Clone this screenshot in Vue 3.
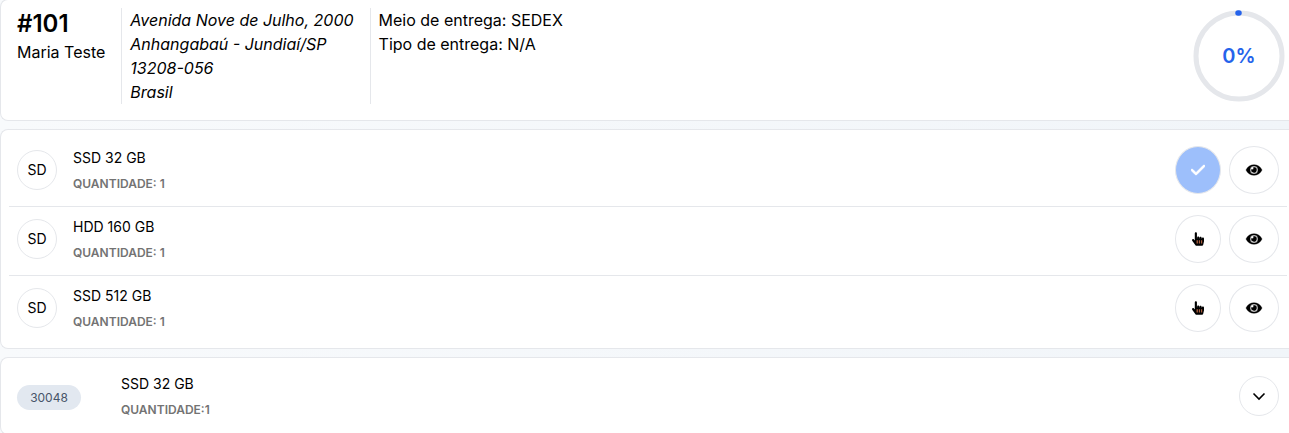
<script setup>
const items = [
  { name: 'SSD 32 GB', initials: 'SD', quantity: 1, done: true },
  { name: 'HDD 160 GB', initials: 'SD', quantity: 1, done: false },
  { name: 'SSD 512 GB', initials: 'SD', quantity: 1, done: false },
]
</script>

<template>
  <main class="page">
    <header class="card order">
      <div class="customer">
        <h1>#101</h1>
        <p>Maria Teste</p>
      </div>
      <address>
        Avenida Nove de Julho, 2000<br />
        Anhangabaú - Jundiaí/SP<br />
        13208-056<br />
        Brasil
      </address>
      <div class="delivery">
        <p>Meio de entrega: SEDEX</p>
        <p>Tipo de entrega: N/A</p>
      </div>
      <div class="progress">
        <svg viewBox="0 0 96 96" aria-hidden="true">
          <circle cx="48" cy="48" r="43" fill="none" stroke="#e5e7eb" stroke-width="5" />
          <path d="M47 5h1" fill="none" stroke="#2563eb" stroke-width="5.500" stroke-linecap="round" />
        </svg>
        <span>0%</span>
      </div>
    </header>

    <ul class="card items">
      <li v-for="item in items" :key="item.name">
        <div class="row">
          <span class="avatar">{{ item.initials }}</span>
          <div class="info">
            <p class="name">{{ item.name }}</p>
            <p class="quantity">QUANTIDADE: {{ item.quantity }}</p>
          </div>
          <button v-if="item.done" type="button" class="round pick done" aria-label="Separado" disabled>
            <svg viewBox="0 0 448 512" class="check">
              <path d="M438.6 105.4c12.5 12.5 12.5 32.8 0 45.3l-256 256c-12.5 12.5-32.8 12.5-45.3 0l-128-128c-12.5-12.5-12.5-32.8 0-45.3s32.8-12.5 45.3 0L160 338.7 393.4 105.4c12.5-12.5 32.8-12.5 45.3 0z" />
            </svg>
          </button>
          <button v-else type="button" class="round pick" aria-label="Separar">
            <svg viewBox="0 0 448 512" class="hand">
              <path d="M448 240v96c0 3.084-.356 6.159-1.063 9.162l-32 136C410.686 499.23 394.562 512 376 512H168a40.004 40.004 0 0 1-32.35-16.473l-127.997-176c-12.993-17.866-9.043-42.883 8.822-55.876 17.867-12.994 42.884-9.043 55.877 8.823L104 315.992V40c0-22.091 17.908-40 40-40s40 17.909 40 40v200h8v-40c0-22.091 17.908-40 40-40s40 17.909 40 40v40h8v-24c0-22.091 17.908-40 40-40s40 17.909 40 40v24h8c0-22.091 17.908-40 40-40s40 17.909 40 40z" />
              <path class="gaps" d="M170 300h50v120h-50zM255 300h45v120h-45zM335 300h45v120h-45z" />
            </svg>
          </button>
          <button type="button" class="round view" aria-label="Visualizar">
            <svg viewBox="0 0 576 512" class="eye">
              <path d="M572.52 241.4C518.29 135.59 410.93 64 288 64S57.68 135.64 3.48 241.41a32.35 32.35 0 0 0 0 29.19C57.71 376.41 165.07 448 288 448s230.32-71.64 284.52-177.41a32.35 32.35 0 0 0 0-29.19zM288 400a144 144 0 1 1 144-144 143.93 143.93 0 0 1-144 144zm0-240a95.31 95.31 0 0 0-25.31 3.79 47.85 47.85 0 0 1-66.9 66.9A95.78 95.78 0 1 0 288 160z" />
            </svg>
          </button>
        </div>
      </li>
    </ul>

    <section class="card package">
      <span class="badge">30048</span>
      <div class="info">
        <p class="name">SSD 32 GB</p>
        <p class="quantity">QUANTIDADE:1</p>
      </div>
      <button type="button" class="round toggle" aria-label="Expandir">
        <svg viewBox="0 0 14 14" class="chevron">
          <path d="M1.500 4.500 7 10l5.500-5.500" />
        </svg>
      </button>
    </section>
  </main>
</template>

<style>
body {
  overflow: hidden;
  background: linear-gradient(to right, #f8fafc, #f1f5f9);
}
</style>

<style scoped>
.page {
  display: flex;
  flex-direction: column;
  gap: 8px;
  margin-top: -1px;
  color: #000;
  font: 16px/24px Inter, "Liberation Sans", sans-serif;
}
h1,
p,
ul {
  margin: 0;
  padding: 0;
}
.card {
  padding: 8px 2px 8px 8px;
  border: 1px solid #e5e7eb;
  border-right: 0;
  border-radius: 8px 0 0 8px;
  background: #fff;
}
.order {
  display: flex;
  align-items: flex-start;
  padding-bottom: 16px;
}
.customer,
address {
  align-self: stretch;
  padding: 0 16px 0 8px;
  border-right: 1px solid #e5e7eb;
}
h1 {
  font-size: 24px;
  line-height: 32px;
  font-weight: 600;
}
.delivery {
  padding: 0 8px;
}
.progress {
  display: grid;
  place-items: center;
  width: 96px;
  height: 96px;
  margin-left: auto;
}
.progress > * {
  grid-area: 1 / 1;
}
.progress span {
  color: #2563eb;
  font-size: 20px;
  line-height: 28px;
  font-weight: 600;
}
svg {
  display: block;
}
.items {
  list-style: none;
}
li + li {
  margin-top: 4px;
  border-top: 1px solid #e5e7eb;
}
.row,
.package {
  display: flex;
  align-items: center;
}
.row {
  height: 64px;
  padding: 0 8px;
}
.avatar {
  display: grid;
  place-items: center;
  box-sizing: border-box;
  width: 40px;
  height: 40px;
  margin-right: 16px;
  border: 1px solid #e5e7eb;
  border-radius: 50%;
  font-size: 14px;
  line-height: 20px;
}
.info {
  flex: 1;
  padding-top: 2px;
}
.name {
  font-size: 14px;
  line-height: 24px;
}
.quantity {
  margin-top: 2px;
  color: #737373;
  font-size: 12px;
  line-height: 24px;
  font-weight: 600;
}
.round {
  display: grid;
  place-items: center;
  box-sizing: border-box;
  height: 48px;
  padding: 0;
  border: 1px solid #e5e7eb;
  border-radius: 50%;
  background: #fff;
  color: #000;
  fill: currentColor;
}
.pick {
  width: 46px;
  margin-right: 8px;
}
.done {
  background: #9dbffb;
  color: #fff;
}
.view {
  width: 50px;
}
.check {
  width: 14px;
  height: 16px;
  stroke: currentColor;
  stroke-width: 20;
}
.hand {
  width: 12px;
  height: 14px;
}
.gaps {
  fill: #a85c3c;
}
.eye {
  width: 16px;
  height: 14px;
  overflow: visible;
  stroke: currentColor;
  stroke-width: 14;
}
.package {
  min-height: 60px;
  padding: 8px 10px 8px 16px;
}
.badge {
  box-sizing: border-box;
  width: 64px;
  margin: 2px 40px 0 0;
  border-radius: 999px;
  background: #e2e8f0;
  color: #475569;
  font-size: 12px;
  line-height: 25px;
  text-align: center;
}
.toggle {
  width: 40px;
  height: 40px;
}
.chevron {
  width: 14px;
  height: 14px;
  fill: none;
  stroke: currentColor;
  stroke-width: 1.6;
}
</style>
